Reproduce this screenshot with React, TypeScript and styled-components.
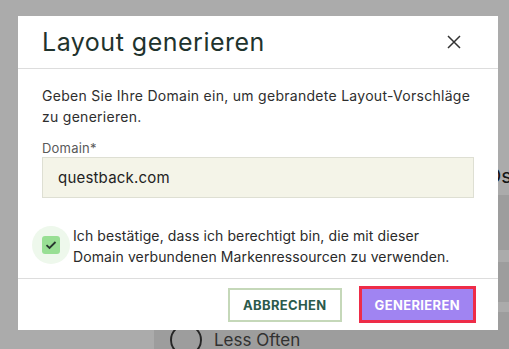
import styled, { createGlobalStyle } from 'styled-components';

const GlobalStyle = createGlobalStyle`
    html, body {
        margin: 0;
        padding: 0;
        font-family: Inter, "Noto Sans", sans-serif;
        background: #ffffff;
    }
`;

const Page = styled.div`
    display: grid;
    grid-template-columns: 154px 1fr;
    height: 100vh;
    overflow: hidden;
    background: #ffffff;
`;

const SideColumn = styled.div`
    background: #ffffff;
`;

const MainColumn = styled.div`
    display: flex;
    flex-direction: column;
    min-width: 0;
`;

const MainHeading = styled.div`
    height: 195px;
    padding: 164px 0 0 332px;
    box-sizing: border-box;
    font-size: 20px;
    color: #222;
    white-space: nowrap;
`;

const Panel = styled.div<{ $h: number }>`
    height: ${p => p.$h}px;
    background: #ebebeb;
    flex-shrink: 0;
`;

const PanelGap = styled.div<{ $h: number }>`
    height: ${p => p.$h}px;
    flex-shrink: 0;
`;

const LastPanel = styled.div`
    flex: 1;
    background: #ebebeb;
    display: flex;
    align-items: flex-start;
    gap: 12px;
    padding: 12px 0 0 16px;
`;

const Radio = styled.span`
    width: 32px;
    height: 32px;
    box-sizing: border-box;
    border: 2px solid #3a3a3a;
    border-radius: 50%;
    flex-shrink: 0;
`;

const RadioLabel = styled.span`
    font-size: 17px;
    line-height: 32px;
    color: #4a4a4a;
`;

const Overlay = styled.div`
    position: fixed;
    inset: 0;
    background: rgba(0, 0, 0, 0.33);
`;

const Dialog = styled.div`
    position: fixed;
    left: 18px;
    top: 16px;
    width: 480px;
    background: #ffffff;
    display: flex;
    flex-direction: column;
`;

const DialogHeader = styled.div`
    height: 52px;
    padding: 0 24px;
    display: flex;
    align-items: center;
    justify-content: space-between;
    border-bottom: 1px solid #dddddd;
`;

const Title = styled.h2`
    margin: 0;
    font-size: 25px;
    font-weight: 400;
    letter-spacing: 0.5px;
    color: #1f332d;
`;

const CloseButton = styled.button`
    width: 40px;
    height: 40px;
    border: none;
    background: none;
    padding: 0;
    display: flex;
    align-items: center;
    justify-content: center;
    cursor: pointer;
`;

const DialogBody = styled.div`
    padding: 16px 24px 11px;
    display: flex;
    flex-direction: column;
`;

const Intro = styled.p`
    margin: 0;
    font-size: 14px;
    line-height: 21px;
    letter-spacing: 0.28px;
    color: #2e2e2e;
`;

const FieldLabel = styled.label`
    margin-top: 12px;
    font-size: 13px;
    line-height: 18px;
    letter-spacing: 0.2px;
    color: #5a5a5a;
`;

const TextInput = styled.input`
    height: 41px;
    box-sizing: border-box;
    border: 1px solid #dedfd3;
    background: #f4f4e8;
    padding: 0 15px;
    font-family: inherit;
    font-size: 15px;
    letter-spacing: 0.2px;
    color: #222;
    outline: none;
`;

const ConfirmRow = styled.div`
    margin-top: 28px;
    display: flex;
    align-items: flex-start;
    gap: 3px;
    margin-left: -10px;
`;

const CheckHalo = styled.span`
    width: 38px;
    height: 38px;
    border-radius: 50%;
    background: #eef8ec;
    display: flex;
    align-items: center;
    justify-content: center;
    flex-shrink: 0;
`;

const CheckBox = styled.span`
    width: 18px;
    height: 18px;
    border-radius: 3px;
    background: #98df94;
    display: flex;
    align-items: center;
    justify-content: center;
`;

const ConfirmText = styled.span`
    padding-right: 20px;
    font-size: 14px;
    line-height: 20.5px;
    letter-spacing: 0.1px;
    color: #2a2a2a;
`;

const DialogFooter = styled.div`
    border-top: 1px solid #dddddd;
    padding: 7px 22px 7px 24px;
    display: flex;
    align-items: center;
    justify-content: flex-end;
    gap: 17px;
`;

const Button = styled.button<{ $primary?: boolean }>`
    height: ${p => (p.$primary ? 37 : 34)}px;
    box-sizing: border-box;
    padding: 0 13px;
    border: ${p => (p.$primary ? '3px solid #ee2c48' : '2px solid #c5d8b9')};
    background: ${p => (p.$primary ? '#a084f2' : '#ffffff')};
    color: ${p => (p.$primary ? '#ffffff' : '#2b5a4b')};
    font-family: inherit;
    font-size: 13px;
    font-weight: 700;
    letter-spacing: 0.35px;
    cursor: pointer;
`;

const App = () => {
    return (
        <>
            <GlobalStyle />
            <Page>
                <SideColumn />
                <MainColumn>
                    <MainHeading>Os</MainHeading>
                    <Panel $h={55} />
                    <PanelGap $h={12} />
                    <Panel $h={40} />
                    <PanelGap $h={10} />
                    <LastPanel>
                        <Radio />
                        <RadioLabel>Less Often</RadioLabel>
                    </LastPanel>
                </MainColumn>
            </Page>
            <Overlay />
            <Dialog>
                <DialogHeader>
                    <Title>Layout generieren</Title>
                    <CloseButton aria-label="Schließen">
                        <svg width="14" height="14" viewBox="0 0 14 14">
                            <path d="M1 1 L13 13 M13 1 L1 13" stroke="#333" strokeWidth="1.5" fill="none" />
                        </svg>
                    </CloseButton>
                </DialogHeader>
                <DialogBody>
                    <Intro>
                        Geben Sie Ihre Domain ein, um gebrandete Layout-Vorschläge zu generieren.
                    </Intro>
                    <FieldLabel>Domain*</FieldLabel>
                    <TextInput defaultValue="questback.com" />
                    <ConfirmRow>
                        <CheckHalo>
                            <CheckBox>
                                <svg width="12" height="12" viewBox="0 0 12 12">
                                    <path d="M1.5 6.2 L4.5 9 L10.5 3" stroke="#28382f" strokeWidth="1.8" fill="none" />
                                </svg>
                            </CheckBox>
                        </CheckHalo>
                        <ConfirmText>
                            Ich bestätige, dass ich berechtigt bin, die mit dieser Domain verbundenen Markenressourcen zu verwenden.
                        </ConfirmText>
                    </ConfirmRow>
                </DialogBody>
                <DialogFooter>
                    <Button>ABBRECHEN</Button>
                    <Button $primary>GENERIEREN</Button>
                </DialogFooter>
            </Dialog>
        </>
    );
};

export default App;
